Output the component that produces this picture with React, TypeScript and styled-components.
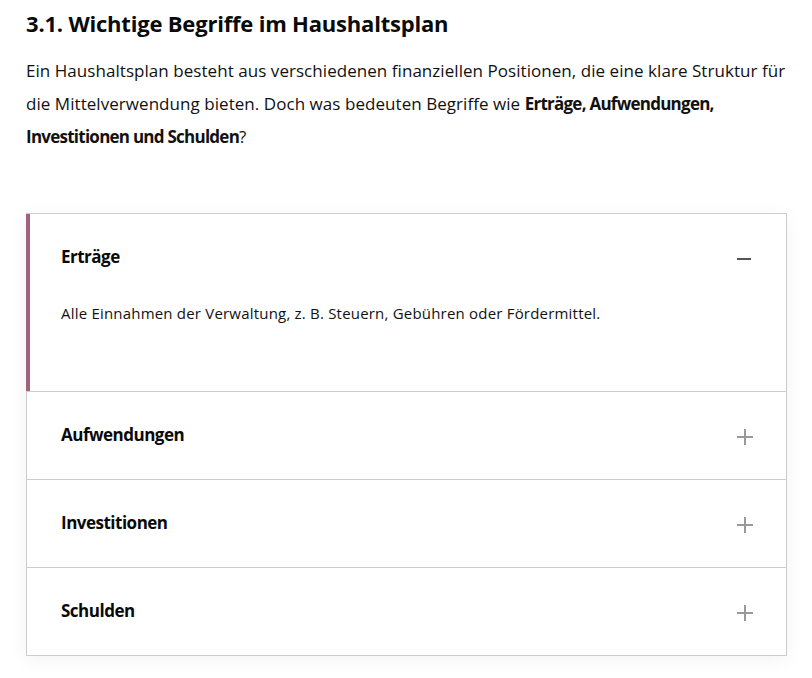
import { useState } from "react";
import styled, { createGlobalStyle } from "styled-components";

const GlobalStyle = createGlobalStyle`
  html, body {
    margin: 0;
    padding: 0;
    background: #ffffff;
  }
  body {
    font-family: "Open Sans", "Noto Sans", sans-serif;
    color: #111;
  }
`;

const Page = styled.div`
  padding: 8px 25px 22px 26px;
`;

const Heading = styled.h2`
  margin: 0;
  font-size: 22px;
  line-height: 30px;
  font-weight: 700;
  color: #0a0a0a;
  letter-spacing: -0.2px;
`;

const Intro = styled.p`
  margin: 16px 0 0;
  font-size: 17px;
  line-height: 33px;
  white-space: nowrap;
  letter-spacing: 0.05px;

  strong {
    font-weight: 700;
    letter-spacing: -0.75px;
  }
`;

const Card = styled.div`
  margin-top: 60px;
  width: 761px;
  border-top: 1px solid #cccccc;
  border-right: 1px solid #cccccc;
  border-bottom: 1px solid #cccccc;
  box-sizing: border-box;
  background: #fff;
  box-shadow: 0 4px 18px rgba(0, 0, 0, 0.05);
`;

const Item = styled.div<{ $open: boolean }>`
  border-left: ${(p) => (p.$open ? "4px solid #a0627f" : "1px solid #cccccc")};
  & + & {
    border-top: 1px solid #cccccc;
  }
`;

const Header = styled.button`
  display: flex;
  align-items: center;
  justify-content: space-between;
  width: 100%;
  height: 87px;
  padding: 0 33px 0 0;
  border: none;
  background: transparent;
  cursor: pointer;
  font-family: inherit;
  text-align: left;
  box-sizing: border-box;
`;

const Title = styled.span<{ $open: boolean }>`
  padding-left: ${(p) => (p.$open ? "31px" : "34px")};
  font-size: 17px;
  font-weight: 700;
  color: #0a0a0a;
  letter-spacing: -0.5px;
  margin-top: -3px;
`;

const Body = styled.div`
  padding: 0 34px 66px 31px;
  font-size: 15px;
  line-height: 24px;
  color: #111;
  letter-spacing: 0.2px;
`;

const Icon = styled.svg<{ $open: boolean }>`
  width: 16px;
  height: 16px;
  flex: none;
  margin-top: 3px;
  color: ${(p) => (p.$open ? "#555555" : "#999999")};
`;

const items = [
  {
    title: "Erträge",
    text: "Alle Einnahmen der Verwaltung, z. B. Steuern, Gebühren oder Fördermittel.",
  },
  {
    title: "Aufwendungen",
    text: "Alle laufenden Ausgaben, z. B. Personal-, Sach- und Betriebskosten.",
  },
  {
    title: "Investitionen",
    text: "Ausgaben für langfristige Anschaffungen wie Gebäude, Straßen oder Technik.",
  },
  {
    title: "Schulden",
    text: "Verbindlichkeiten der Verwaltung, z. B. aufgenommene Kredite.",
  },
];

function ToggleIcon({ open }: { open: boolean }) {
  return (
    <Icon $open={open} viewBox="0 0 16 16" aria-hidden="true">
      {open ? (
        <rect x="0" y="7" width="14" height="2" fill="currentColor" />
      ) : (
        <>
          <rect x="0" y="7" width="16" height="2" fill="currentColor" />
          <rect x="7" y="0" width="2" height="16" fill="currentColor" />
        </>
      )}
    </Icon>
  );
}

export default function App() {
  const [openIndex, setOpenIndex] = useState<number | null>(0);

  return (
    <>
      <GlobalStyle />
      <Page>
        <Heading>3.1. Wichtige Begriffe im Haushaltsplan</Heading>
        <Intro>
          Ein Haushaltsplan besteht aus verschiedenen finanziellen Positionen, die eine klare Struktur für
          <br />
          die Mittelverwendung bieten. Doch was bedeuten Begriffe wie <strong>Erträge, Aufwendungen,</strong>
          <br />
          <strong>Investitionen und Schulden</strong>?
        </Intro>

        <Card>
          {items.map((item, i) => {
            const open = openIndex === i;
            return (
              <Item key={item.title} $open={open}>
                <Header onClick={() => setOpenIndex(open ? null : i)}>
                  <Title $open={open}>{item.title}</Title>
                  <ToggleIcon open={open} />
                </Header>
                {open && <Body>{item.text}</Body>}
              </Item>
            );
          })}
        </Card>
      </Page>
    </>
  );
}
